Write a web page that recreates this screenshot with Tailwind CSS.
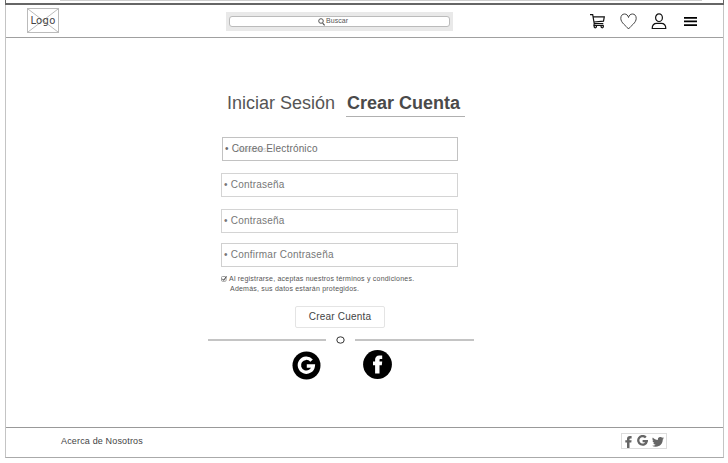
<!DOCTYPE html>
<html lang="es">
<head>
<meta charset="utf-8">
<title>Crear Cuenta</title>
<script src="https://cdn.jsdelivr.net/npm/@tailwindcss/browser@4"></script>
</head>
<body class="bg-white w-[728px] h-[463px] overflow-hidden font-['Liberation_Sans',Arial,sans-serif] text-[#555]">
<div class="h-[3px] ml-[5px] w-[719px] border-x border-[#666]"><div class="ml-[54px] w-[642px] h-px bg-[#cfcfcf]"></div></div>
<div class="ml-[5px] w-[719px] h-[2px] bg-[#666]"></div>
<div class="ml-[5px] w-[719px] h-[453px] border-x border-b border-x-[#c4c4c4] border-b-[#aaa] flex flex-col">
  <header class="h-[33px] shrink-0 border-b border-[#a0a0a0] flex items-start">
    <div class="relative ml-[21px] mt-[3px] w-[32px] h-[25px] border border-[#bbb] flex items-center justify-center">
      <svg class="absolute inset-0 w-full h-full" viewBox="0 0 30 23" preserveAspectRatio="none" stroke="#aaa" stroke-width=".8"><path d="M0 0L30 23M30 0L0 23"/></svg>
      <span class="relative text-[10px] leading-[12px] tracking-[0.3px] text-[#444] font-['DejaVu_Sans','Liberation_Sans',sans-serif]">Logo</span>
    </div>
    <div class="ml-[167px] mt-[7px] w-[227px] h-[19px] bg-[#e9e9e9] px-[3px] pt-[4px]">
      <div class="h-[11px] border border-[#bbb] rounded-[3px] bg-white flex items-center pl-[88px] text-[7px] leading-[9px]">
        <svg class="w-[7px] h-[8px] mr-px" viewBox="0 0 7 8" fill="none" stroke="#444"><circle cx="3" cy="3" r="2.3" stroke-width=".9"/><path d="M4.6 5L6.6 7.4" stroke-width="1.1"/></svg>
        <span class="relative top-[-1px] tracking-[0.05px]">Buscar</span>
      </div>
    </div>
    <svg class="ml-[137px] mt-[9px] w-[16px] h-[15px]" viewBox="0 0 16 15" fill="none" stroke="#111" stroke-width="1.2"><path d="M0 .7H2.7L4.2 9.5H13.3M3 2.9H14.3L13.5 7.2L4 8M4.2 9.5L4 11.3H13.6"/><circle cx="5.3" cy="12.6" r="1.2"/><circle cx="12.2" cy="12.6" r="1.2"/></svg>
    <svg class="ml-[14px] mt-[8px] w-[17px] h-[17px]" viewBox="0 0 17 17" fill="none" stroke="#333" stroke-width=".9"><path d="M8.5 16C6.3 12.8.8 10 .8 5.3C.8 2.7 2.3 1 4.5 1C6.6 1 8 2.4 8.5 4.5C9 2.4 10.4 1 12.5 1C14.7 1 16.2 2.7 16.2 5.3C16.2 10 10.7 12.8 8.5 16Z"/></svg>
    <svg class="ml-[14px] mt-[8px] w-[16px] h-[17px]" viewBox="0 0 16 17" fill="none" stroke="#111" stroke-width="1.2"><ellipse cx="8" cy="4.7" rx="3.4" ry="3.8"/><path d="M1.2 15.5C1.2 12.2 3 10.3 5.8 10.3H10.2C13 10.3 14.8 12.2 14.8 15.5Z" stroke-linejoin="round"/></svg>
    <svg class="ml-[17px] mt-[12px] w-[13px] h-[9px]" viewBox="0 0 13 9" fill="#000"><path d="M0 0H13V1.7H0ZM0 3.6H13V5.3H0ZM0 7.2H13V8.9H0Z"/></svg>
  </header>

  <main class="h-[389px] shrink-0">
    <div class="ml-[221px] pt-[52px] flex text-[18px] leading-[26px]">
      <h1 class="w-[119px] whitespace-nowrap">Iniciar Sesión</h1>
      <h1 class="w-[119px] h-[27px] pl-[1px] border-b border-[#b0b0b0] font-bold text-[#4a4a4a] whitespace-nowrap">Crear Cuenta</h1>
    </div>
    <form class="ml-[215px] mt-[20px] w-[237px] flex flex-col text-[10px] leading-[12px] text-[#777]">
      <div class="relative ml-px h-[24px] border border-[#c2c2c2] flex items-center pl-[2px] text-[#6c6c6c]"><span class="absolute left-[14px] top-[6px] text-[7px] tracking-[0.2px] text-[#ccc]">Nombres</span><span class="relative tracking-[0.18px]">• Correo Electrónico</span></div>
      <div class="mt-[12px] h-[24px] border border-[#d4d4d4] flex items-center pl-[2px]"><span class="tracking-[0.22px]">• Contraseña</span></div>
      <div class="mt-[12px] h-[24px] border border-[#d4d4d4] flex items-center pl-[2px]"><span class="tracking-[0.22px]">• Contraseña</span></div>
      <div class="mt-[10px] h-[24px] border border-[#d0d0d0] flex items-center pl-[2px]"><span class="tracking-[0.23px]">• Confirmar Contraseña</span></div>
      <label class="mt-[7px] flex text-[7px] leading-[10px] text-[#555]">
        <svg class="mt-[2px] mr-[2px] w-[6px] h-[6px] shrink-0" viewBox="0 0 6 6" fill="none"><rect x=".5" y=".5" width="4.6" height="4.8" rx="1" stroke="#888" stroke-width=".8"/><path d="M1.4 2.8L2.6 4.3L5.5 .5" stroke="#333" stroke-width="1"/></svg>
        <span class="whitespace-nowrap tracking-[0.21px]">Al registrarse, aceptas nuestros términos y condiciones.<br><span class="pl-px">Además, sus datos estarán protegidos.</span></span>
      </label>
      <button type="button" class="ml-[74px] mt-[12px] w-[90px] h-[22px] border border-[#e4e4e4] rounded-[2px] text-[10px] leading-[12px] tracking-[0.2px] text-[#444]">Crear Cuenta</button>
    </form>
    <div class="ml-[202px] mt-[6px] w-[266px] h-[12px] flex items-center">
      <div class="w-[118px] h-[2px] bg-[#c4c4c4]"></div>
      <svg class="mx-[10px] w-[9px] h-[8px]" viewBox="0 0 9 8" fill="none" stroke="#333"><ellipse cx="4.5" cy="4" rx="3.7" ry="3.2"/></svg>
      <div class="w-[119px] h-[2px] bg-[#c4c4c4]"></div>
    </div>
    <div class="ml-[286px] mt-[4px] flex items-start">
      <svg class="mt-[1px] w-[29px] h-[29px]" viewBox="0 0 29 29"><circle cx="14.5" cy="14.5" r="14"/><path d="M19.6 9.6A7 7 0 1 0 21.3 15H14.8" fill="none" stroke="#fff" stroke-width="3.3"/></svg>
      <svg class="ml-[42px] w-[29px] h-[29px]" viewBox="0 0 29 29"><circle cx="14.5" cy="14.5" r="14.4"/><path d="M12.1 23.6V15.2H10V11.6H12.100V9.6C12.100 7 13.600 5.400 16.300 5.400H19.200V9.100H17.600C16.800 9.100 16.500 9.400 16.500 10.200V11.600H19.200L18.800 15.200H16.500V23.600Z" fill="#fff"/></svg>
    </div>
  </main>

  <footer class="flex-1 border-t border-[#999] flex items-start">
    <a class="ml-[55px] mt-[7px] w-[560px] text-[9px] leading-[12px] tracking-[0.16px] text-[#444]">Acerca de Nosotros</a>
    <div class="mt-[5px] w-[46px] h-[16px] border border-[#ddd] flex items-start">
      <svg class="ml-[3px] mt-[2px] w-[7px] h-[12px]" viewBox="0 0 7 12" fill="#666"><path d="M2 12V6.5H.3V4.2H2V3C2 1.1 3 .1 4.9 .1H6.6V2.4H5.5C4.8 2.4 4.5 2.7 4.5 3.3V4.2H6.6L6.3 6.5H4.5V12Z"/></svg>
      <svg class="ml-[5px] mt-[1px] w-[11px] h-[12px]" viewBox="0 0 11 12" fill="none" stroke="#666" stroke-width="2.3"><path d="M8.8 2.5A4.3 4.3 0 1 0 9.8 6.2H5.6"/></svg>
      <svg class="ml-[4px] mt-[3px] w-[12px] h-[10px]" viewBox="0 0 24 20" fill="#666"><path d="M24 2.4c-.9.4-1.800.7-2.800.8 1-.6 1.800-1.600 2.200-2.700-1 .6-2 1-3.100 1.200a4.900 4.900 0 0 0-8.400 4.500C7.700 6 4.100 4 1.700 1A4.900 4.900 0 0 0 3.200 7.600c-.8 0-1.600-.2-2.200-.6v.1c0 2.400 1.700 4.400 3.900 4.800-.7.2-1.500.2-2.200.1.600 2 2.400 3.400 4.600 3.400A9.900 9.900 0 0 1 0 17.400 14 14 0 0 0 7.500 19.600c9.100 0 14-7.500 14-14v-.6A10 10 0 0 0 24 2.400z"/></svg>
    </div>
  </footer>
</div>
</body>
</html>
